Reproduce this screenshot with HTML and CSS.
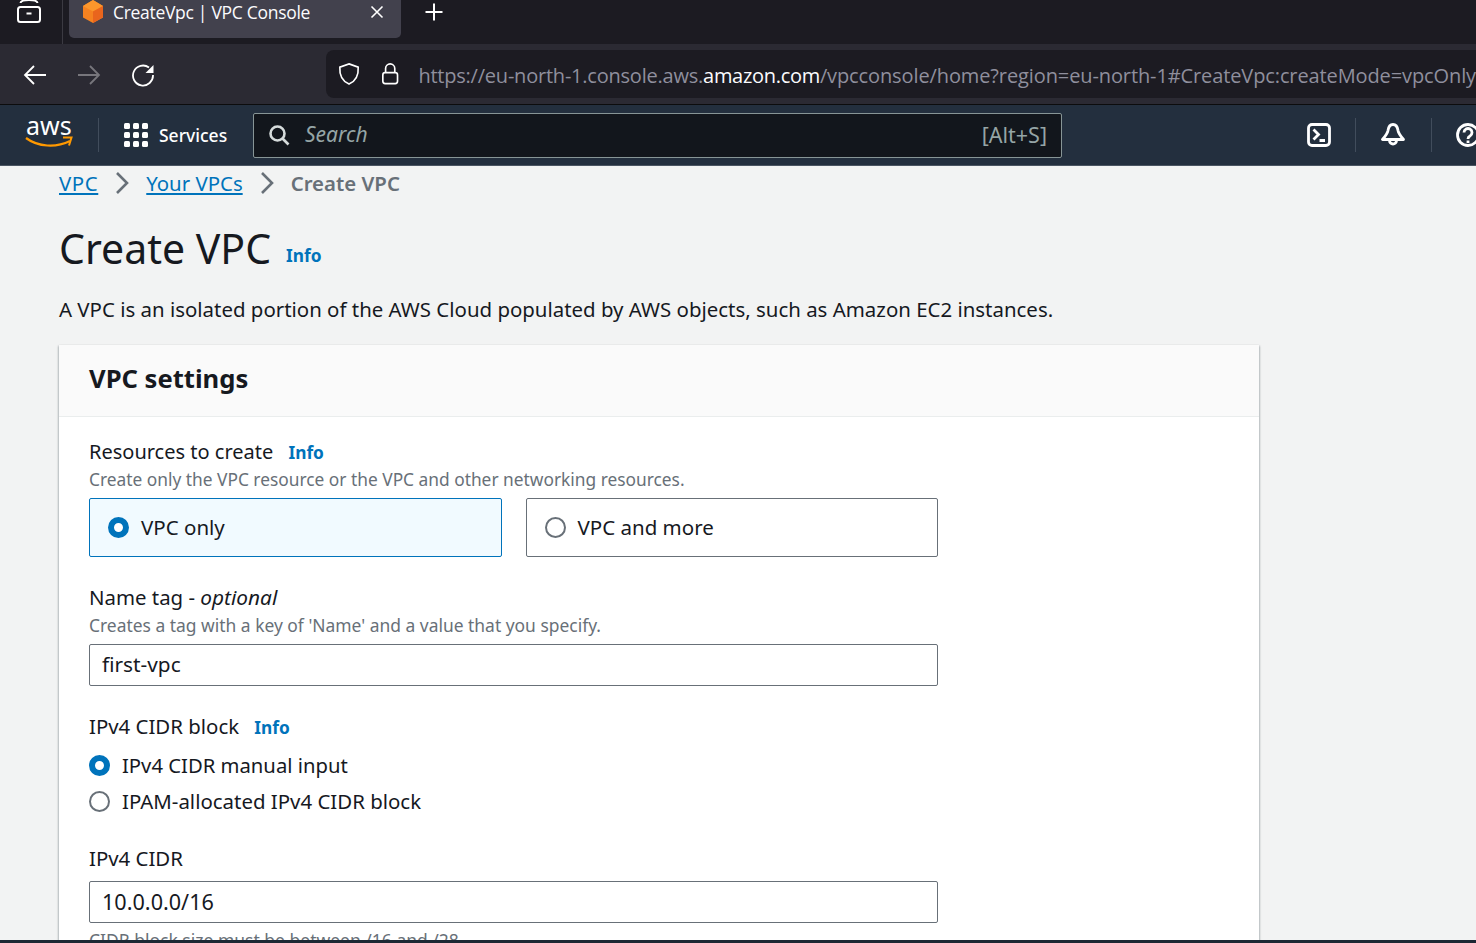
FILE: index.html
```html
<!DOCTYPE html>
<html lang="en">
<head>
    <meta charset="UTF-8">
    <title>CreateVpc | VPC Console</title>
    <link rel="stylesheet" href="styles.css">
</head>
<body>
    <!-- browser chrome -->
    <div class="tabbar">
        <div class="tab-side">
            <svg width="26" height="24" viewBox="0 0 26 24" fill="none" stroke="#fff" stroke-width="2"><path d="M4.500 3C5 -1 21 -1 21.500 3"/><rect x="2" y="7" width="22" height="15" rx="2.500"/><path d="M10.500 13.500h5"/></svg>
        </div>
        <div class="tab">
            <svg width="24" height="24" viewBox="0 0 24 24"><path d="M12 0l10 6v11.500L12 23 2 17.500V6z" fill="#f58220"/><path d="M2 6l10-6 10 6-10 5.500z" fill="#fb962c"/><path d="M12 11.500L22 6v11.500L12 23z" fill="#e9651d"/></svg>
            <span class="tab-title">CreateVpc | VPC Console</span>
            <svg class="tab-close" width="14" height="14" viewBox="0 0 14 14" stroke="#fff" stroke-width="1.600"><path d="M1.500 1.500l11 11M12.500 1.500l-11 11"/></svg>
        </div>
        <svg class="tab-new" width="20" height="20" viewBox="0 0 20 20" stroke="#fff" stroke-width="2"><path d="M10 1.500v17M1.500 10h17"/></svg>
    </div>
    <div class="toolbar">
        <div class="nav-btns">
            <svg width="24" height="24" viewBox="0 0 24 24" fill="none" stroke="#fff" stroke-width="1.800"><path d="M23 12H2M11 3l-9 9 9 9"/></svg>
            <svg width="24" height="24" viewBox="0 0 24 24" fill="none" stroke="#77767c" stroke-width="1.800"><path d="M1 12h21M13 3l9 9-9 9"/></svg>
            <svg width="24" height="24" viewBox="0 0 24 24" fill="none" stroke="#fff" stroke-width="1.800"><path d="M18 4.500A10 10 0 1 0 22 12"/><path d="M22.500 2v8h-8z" fill="#fff" stroke="none"/></svg>
        </div>
        <div class="urlbar">
            <svg width="24" height="26" viewBox="0 0 24 26" fill="none" stroke="#fff" stroke-width="1.800"><path d="M12 2l10 3.500c.5 8-2 15-10 18.500C4 20.500 1.500 13.500 2 5.500z"/></svg>
            <svg class="lock" width="20" height="26" viewBox="0 0 20 26" fill="none" stroke="#fff" stroke-width="1.800"><rect x="2" y="11.500" width="16" height="12" rx="2.500"/><path d="M5 11.500V7a5 5 0 0 1 10 0v4.500"/></svg>
            <span class="url">https://eu-north-1.console.aws.<b>amazon.com</b><span>/vpcconsole/home?region=eu-north-1#CreateVpc:createMode=vpcOnly</span></span>
        </div>
    </div>

    <!-- aws console nav -->
    <header class="awsnav">
        <div class="logo">
            <span class="logo-text">aws</span>
            <svg width="48" height="12" viewBox="0 0 48 12" fill="none"><path d="M1 2c12 9 30 10 44 3" stroke="#f90" stroke-width="2.200"/><path d="M38 1.500l8.500 0-2.500 8" stroke="#f90" stroke-width="2"/></svg>
        </div>
        <div class="services">
            <svg width="24" height="24" viewBox="0 0 24 24" fill="#fff"><rect width="6" height="6" rx="1.500"/><rect x="9" width="6" height="6" rx="1.500"/><rect x="18" width="6" height="6" rx="1.500"/><rect y="9" width="6" height="6" rx="1.500"/><rect x="9" y="9" width="6" height="6" rx="1.500"/><rect x="18" y="9" width="6" height="6" rx="1.500"/><rect y="18" width="6" height="6" rx="1.500"/><rect x="9" y="18" width="6" height="6" rx="1.500"/><rect x="18" y="18" width="6" height="6" rx="1.500"/></svg>
            <span>Services</span>
        </div>
        <div class="searchbox">
            <svg width="22" height="22" viewBox="0 0 22 22" fill="none" stroke="#d5dbdb" stroke-width="2.600"><circle cx="9.500" cy="9.500" r="7"/><path d="M14.500 14.500l6 6"/></svg>
            <span class="search-hint">Search</span>
            <span class="search-key">[Alt+S]</span>
        </div>
        <div class="nav-icons">
            <div class="nav-icon terminal">
                <svg width="24" height="24" viewBox="0 0 24 24" fill="none" stroke="#fff" stroke-width="2.800"><rect x="1.500" y="1.500" width="21" height="21" rx="3.500"/><path d="M6.500 6.500l5 5-5 5M12.500 17.500h5.500"/></svg>
            </div>
            <div class="nav-icon bell">
                <svg width="24" height="24" viewBox="0 0 24 24" fill="none" stroke="#fff" stroke-width="2.800"><path d="M12 1.500c-2.800 0-4.500 2.500-5 6-.5 3-2.500 5.500-5.500 9h21c-3-3.500-5-6-5.500-9-.5-3.500-2.200-6-5-6z" stroke-linejoin="round"/><path d="M8.500 17.500a3.500 3.500 0 0 0 7 0"/></svg>
            </div>
            <div class="nav-icon last">
                <svg width="24" height="24" viewBox="0 0 24 24" fill="none" stroke="#fff" stroke-width="2.800"><circle cx="12" cy="12" r="10.500"/><path d="M8 9.500a4 4 0 1 1 6 3.500c-1.500.8-2 1.500-2 3"/><path d="M12 17.500v2.500"/></svg>
            </div>
        </div>
    </header>

    <main class="content">
        <nav class="crumbs">
            <a href="#">VPC</a>
            <svg width="14" height="24" viewBox="0 0 14 24" fill="none" stroke="#687078" stroke-width="2.600"><path d="M2 2l10 10L2 22"/></svg>
            <a href="#">Your VPCs</a>
            <svg width="14" height="24" viewBox="0 0 14 24" fill="none" stroke="#687078" stroke-width="2.600"><path d="M2 2l10 10L2 22"/></svg>
            <span class="crumb-current">Create VPC</span>
        </nav>
        <div class="page-head">
            <h1>Create VPC</h1>
            <a class="info" href="#">Info</a>
        </div>
        <p class="page-desc">A VPC is an isolated portion of the AWS Cloud populated by AWS objects, such as Amazon EC2 instances.</p>

        <section class="card">
            <div class="card-head"><h2>VPC settings</h2></div>
            <div class="card-body">
                <div class="field resources">
                    <div class="label">Resources to create <a class="info" href="#">Info</a></div>
                    <div class="hint">Create only the VPC resource or the VPC and other networking resources.</div>
                    <div class="tiles">
                        <div class="tile selected"><span class="radio on"></span><span class="tile-text">VPC only</span></div>
                        <div class="tile"><span class="radio"></span><span class="tile-text">VPC and more</span></div>
                    </div>
                </div>
                <div class="field nametag">
                    <div class="label">Name tag - <i>optional</i></div>
                    <div class="hint">Creates a tag with a key of 'Name' and a value that you specify.</div>
                    <div class="textbox">first-vpc</div>
                </div>
                <div class="field cidrblock">
                    <div class="label">IPv4 CIDR block <a class="info" href="#">Info</a></div>
                    <div class="radio-row first"><span class="radio on"></span>IPv4 CIDR manual input</div>
                    <div class="radio-row"><span class="radio"></span>IPAM-allocated IPv4 CIDR block</div>
                </div>
                <div class="field cidr">
                    <div class="label">IPv4 CIDR</div>
                    <div class="textbox">10.0.0.0/16</div>
                    <div class="hint">CIDR block size must be between /16 and /28.</div>
                </div>
            </div>
        </section>
    </main>
    <div class="bottom-edge"></div>
</body>
</html>
```

FILE: styles.css
```css
* {
    box-sizing: border-box;
}
html, body {
    height: 100%;
}
body {
    margin: 0;
    height: 943px;
    overflow: hidden;
    display: flex;
    flex-direction: column;
    background-color: #f2f3f3;
    font-family: "Noto Sans", Arial, sans-serif;
    color: #16191f;
}

/* browser chrome */
.tabbar {
    height: 44px;
    flex: none;
    display: flex;
    align-items: flex-start;
    background-color: #1c1b22;
    overflow: hidden;
}
.tab-side {
    width: 63px;
    height: 44px;
    padding: 0 0 0 16px;
    border-right: 1px solid #3b3a42;
}
.tab {
    width: 332px;
    height: 38px;
    margin-left: 6px;
    padding: 0 17px 14px 12px;
    display: flex;
    align-items: center;
    background-color: #42414d;
    border-radius: 0 0 5px 5px;
}
.tab-title {
    margin-left: 8px;
    flex: 1;
    color: #fbfbfe;
    font-family: "Open Sans", sans-serif;
    font-size: 17.500px;
    letter-spacing: -0.300px;
}
.tab-new {
    margin: 2px 0 0 23px;
}
.toolbar {
    height: 60px;
    flex: none;
    display: flex;
    align-items: center;
    background-color: #2b2a33;
}
.nav-btns {
    width: 326px;
    padding: 2px 0 0 23px;
    display: flex;
    gap: 30px;
}
.urlbar {
    flex: 1;
    min-width: 0;
    height: 48px;
    padding-left: 12px;
    display: flex;
    align-items: center;
    background-color: #1c1b22;
    border-radius: 8px 0 0 8px;
    overflow: hidden;
}
.lock {
    margin-left: 21px;
}
.url {
    margin: 2px 0 0 19px;
    white-space: nowrap;
    color: #8f8f9d;
    font-family: "Open Sans", sans-serif;
    font-size: 20px;
    letter-spacing: -0.220px;
}
.url b {
    color: #fbfbfe;
    font-weight: 400;
    letter-spacing: -0.300px;
}
.url span {
    letter-spacing: -0.110px;
}

/* aws nav */
.awsnav {
    height: 62px;
    flex: none;
    display: flex;
    align-items: center;
    background-color: #232f3e;
    border-top: 1px solid #0c0c0d;
    border-bottom: 1px solid #4a5562;
    overflow: hidden;
}
.logo {
    width: 99px;
    height: 34px;
    flex: none;
    padding-left: 26px;
    border-right: 1px solid #414d5c;
    display: flex;
    flex-direction: column;
    color: #fff;
}
.logo-text {
    height: 20px;
    margin-top: -3px;
    font-size: 25px;
    line-height: 20px;
}
.logo svg {
    margin: 1px 0 0 -1px;
}
.services {
    width: 154px;
    flex: none;
    padding-left: 25px;
    display: flex;
    align-items: center;
    gap: 11px;
    color: #fff;
    font-size: 17.500px;
    font-weight: 500;
}
.searchbox {
    width: 809px;
    height: 45px;
    flex: none;
    padding: 0 14px 0 14px;
    display: flex;
    align-items: center;
    background-color: #12161c;
    border: 1px solid #879596;
    border-radius: 2px;
}
.search-hint {
    flex: 1;
    margin: -2px 0 0 15px;
    color: #95a5a6;
    font-size: 21px;
    font-style: italic;
}
.search-key {
    margin-top: -2px;
    color: #95a5a6;
    font-size: 21.500px;
}
.nav-icons {
    margin-left: 218px;
    flex: none;
    display: flex;
}
.nav-icon {
    width: 76px;
    height: 34px;
    flex: none;
    display: flex;
    align-items: center;
    justify-content: center;
    border-right: 1px solid #414d5c;
}
.nav-icon.terminal {
    padding-left: 2px;
}
.nav-icon.bell {
    padding-right: 2px;
}
.nav-icon.last {
    width: 72px;
    border-right: 0;
}

/* page */
.content {
    flex: 1;
    min-height: 0;
    overflow: hidden;
    padding: 0 0 0 59px;
    background-color: #f2f3f3;
}
.crumbs {
    height: 34px;
    display: flex;
    align-items: center;
    gap: 17px;
    font-size: 20.400px;
}
.crumbs a {
    color: #0073bb;
}
.crumbs a:first-child {
    letter-spacing: 0.600px;
}
.crumb-current {
    color: #687078;
    font-weight: 600;
}
.page-head {
    margin-top: 21px;
    height: 54px;
    display: flex;
    align-items: center;
    gap: 15px;
}
h1 {
    margin: 0;
    font-size: 41px;
    font-weight: 400;
}
.page-head .info {
    margin-top: 15px;
}
.info {
    color: #0073bb;
    font-size: 17.300px;
    font-weight: 700;
    text-decoration: none;
}
.page-desc {
    margin: 20px 0 0;
    font-size: 20.430px;
    line-height: 28px;
}
.card {
    width: 1200px;
    margin-top: 22px;
    background-color: #fff;
    box-shadow: 0 1px 2px 0 rgba(0, 28, 36, .3), 1px 1px 2px 0 rgba(0, 28, 36, .15), -1px 1px 2px 0 rgba(0, 28, 36, .15);
}
.card-head {
    height: 72px;
    padding: 0 30px 4px;
    display: flex;
    align-items: center;
    background-color: #fafafa;
    border-bottom: 1px solid #eaeded;
}
h2 {
    margin: 0;
    font-size: 25.600px;
    font-weight: 700;
}
.card-body {
    padding: 21px 30px 0;
}
.field {
    width: 849px;
}
.label {
    height: 28px;
    font-size: 20.400px;
    line-height: 26px;
}
.label i {
    font-size: 20.800px;
}
.resources .label {
    font-size: 20px;
    line-height: 28px;
}
.label .info {
    margin-left: 10px;
}
.hint {
    height: 26px;
    color: #687078;
    font-size: 17.330px;
    line-height: 26px;
}
.tiles {
    margin-top: 6px;
    display: grid;
    grid-template-columns: 1fr 1fr;
    gap: 24px;
}
.tile {
    height: 59px;
    padding: 0 18px;
    display: flex;
    align-items: center;
    gap: 12px;
    border: 1px solid #687078;
    border-radius: 2px;
    font-size: 20.500px;
}
.tile-text {
    margin-top: -2px;
}
.tile.selected {
    background-color: #f1faff;
    border-color: #0073bb;
}
.radio {
    width: 21px;
    height: 21px;
    flex: none;
    border: 2px solid #687078;
    border-radius: 50%;
    background-color: #fff;
}
.radio.on {
    border: 6px solid #0073bb;
}
.nametag {
    margin-top: 27px;
}
.nametag .hint {
    font-size: 17.430px;
}
.textbox {
    height: 42px;
    margin-top: 6px;
    padding: 0 12px 2px;
    display: flex;
    align-items: center;
    background-color: #fff;
    border: 1px solid #687078;
    border-radius: 2px;
    font-size: 20.800px;
}
.cidrblock {
    margin-top: 27px;
}
.radio-row {
    height: 36px;
    display: flex;
    align-items: center;
    gap: 12px;
    font-size: 20.430px;
}
.radio-row.first {
    margin-top: 6px;
    font-size: 20.250px;
}
.cidr {
    margin-top: 26px;
}
.cidr .textbox {
    margin-top: 8px;
    font-size: 21.600px;
}
.cidr .hint {
    margin-top: 4px;
    font-size: 17.500px;
}
.bottom-edge {
    height: 3px;
    flex: none;
    background-color: #1c2733;
}
```
